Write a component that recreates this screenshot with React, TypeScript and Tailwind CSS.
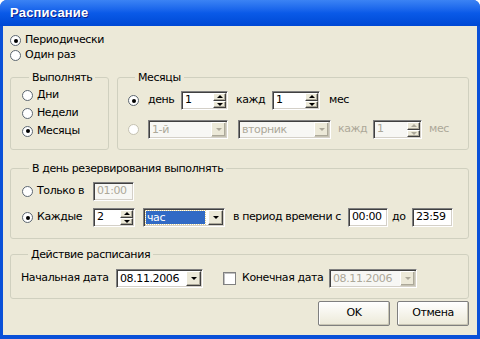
import React from 'react';

const font = { fontFamily: '"DejaVu Sans", Tahoma, sans-serif' };

const Radio = ({ checked, disabled }: { checked?: boolean; disabled?: boolean }) => (
    <span
        className={`relative inline-flex w-[11px] h-[11px] shrink-0 items-center justify-center rounded-full border bg-white ${disabled ? 'border-[#c5c2b2]' : 'border-[#5c6670]'}`}
    >
        {checked && <span className="w-[4px] h-[4px] rounded-full bg-black" />}
    </span>
);

const RadioLabel = ({ checked, disabled, label, w }: { checked?: boolean; disabled?: boolean; label: string; w?: string }) => (
    <div className={`flex items-center h-full ${w ?? ''}`}>
        <Radio checked={checked} disabled={disabled} />
        <span className={`ml-[4px] ${disabled ? 'text-[#aca899]' : 'text-black'}`}>{label}</span>
    </div>
);

// classic sunken field
const Field = ({ w, children, disabled }: { w: string; children: React.ReactNode; disabled?: boolean }) => (
    <div
        className={`flex h-[19px] ${w} border border-t-[#808080] border-l-[#808080] border-b-white border-r-white shadow-[inset_1px_1px_0_#404040,inset_-1px_-1px_0_#d4d0c8] ${disabled ? 'bg-[#f7f7f4] text-[#aca899]' : 'bg-white text-black'}`}
    >
        {children}
    </div>
);

const Arrow = ({ dir, disabled }: { dir: 'up' | 'down'; disabled?: boolean }) => (
    <span
        className={`w-0 h-0 border-l-[3px] border-r-[3px] border-l-transparent border-r-transparent ${dir === 'up' ? 'border-b-[3px]' : 'border-t-[3px]'} ${disabled ? (dir === 'up' ? 'border-b-[#aca899]' : 'border-t-[#aca899]') : dir === 'up' ? 'border-b-black' : 'border-t-black'}`}
    />
);

const RaisedBtn = ({ children, className }: { children: React.ReactNode; className?: string }) => (
    <div
        className={`flex items-center justify-center bg-[#ece9d8] border border-t-white border-l-white border-b-[#404040] border-r-[#404040] shadow-[inset_-1px_-1px_0_#aca899] ${className ?? ''}`}
    >
        {children}
    </div>
);

const Spin = ({ value, w, disabled }: { value: string; w: string; disabled?: boolean }) => (
    <Field w={w} disabled={disabled}>
        <span className="flex-1 pl-[3px] leading-[16px]">{value}</span>
        <div className="flex flex-col w-[13px] m-[1px]">
            <RaisedBtn className="flex-1">
                <Arrow dir="up" disabled={disabled} />
            </RaisedBtn>
            <RaisedBtn className="flex-1">
                <Arrow dir="down" disabled={disabled} />
            </RaisedBtn>
        </div>
    </Field>
);

const Combo = ({ value, w, disabled, selected }: { value: string; w: string; disabled?: boolean; selected?: boolean }) => (
    <Field w={w} disabled={disabled}>
        <div className="flex-1 p-[2px] flex">
            <span
                className={`flex-1 pl-[1px] leading-[13px] ${selected ? 'bg-[#316ac5] text-white outline outline-1 outline-dotted outline-[#e0d090]' : ''}`}
            >
                {value}
            </span>
        </div>
        <RaisedBtn className={`w-[15px] m-[1px] ${disabled ? 'border-b-[#c5c2b2] border-r-[#c5c2b2]' : ''}`}>
            <Arrow dir="down" disabled={disabled} />
        </RaisedBtn>
    </Field>
);

const TextBox = ({ value, w, disabled }: { value: string; w: string; disabled?: boolean }) => (
    <Field w={w} disabled={disabled}>
        <span className="pl-[3px] leading-[16px]">{value}</span>
    </Field>
);

const Group = ({ title, className, children }: { title: string; className: string; children: React.ReactNode }) => (
    <fieldset className={`border border-[#d0d0bf] rounded-[3px] ${className}`}>
        <legend className="ml-[7px] px-[3px] leading-[13px]">{title}</legend>
        {children}
    </fieldset>
);

export default function App() {
    return (
        <div className="w-[480px] h-[339px] bg-white text-[11px] tracking-[-0.4px] text-black" style={font}>
            <div className="flex flex-col w-full h-full rounded-t-[7px] bg-[#0a50d8] overflow-hidden">
                {/* title bar */}
                <div className="h-[26px] shrink-0 flex items-center pl-[10px] bg-gradient-to-b from-[#3b83f4] via-[#0a5ae8] to-[#0048d4]">
                    <span className="text-white font-bold text-[13px] tracking-[0.2px] [text-shadow:1px_1px_0_#0a1e8c]" style={{ fontFamily: '"Liberation Sans", Arial, sans-serif' }}>
                        Расписание
                    </span>
                </div>

                {/* body */}
                <div className="flex-1 flex flex-col mx-[3px] mb-[4px] bg-[#ece9d8] pl-[7px] pr-[8px] pt-[7px]">
                    <div className="flex flex-col">
                        <div className="h-[15px]"><RadioLabel checked label="Периодически" /></div>
                        <div className="h-[15px]"><RadioLabel label="Один раз" /></div>
                    </div>

                    <div className="flex gap-[8px] mt-[8px]">
                        <Group title="Выполнять" className="w-[99px] h-[79px] pl-[11px] pt-[2px]">
                            <div className="h-[18px]"><RadioLabel label="Дни" /></div>
                            <div className="h-[18px]"><RadioLabel label="Недели" /></div>
                            <div className="h-[18px]"><RadioLabel checked label="Месяцы" /></div>
                        </Group>

                        <Group title="Месяцы" className="flex-1 h-[79px] pl-[10px] pt-[7px]">
                            <div className="flex items-center h-[19px]">
                                <Radio checked />
                                <span className="ml-[9px] w-[33px]">день</span>
                                <Spin value="1" w="w-[47px]" />
                                <span className="ml-[8px] w-[36px]">кажд</span>
                                <Spin value="1" w="w-[48px]" />
                                <span className="ml-[9px]">мес</span>
                            </div>
                            <div className="flex items-center h-[19px] mt-[10px]">
                                <Radio disabled />
                                <span className="ml-[9px]" />
                                <Combo value="1-й" w="w-[80px]" disabled />
                                <span className="ml-[10px]" />
                                <Combo value="вторник" w="w-[93px]" disabled />
                                <span className="ml-[7px] w-[35px] text-[#aca899]">кажд</span>
                                <Spin value="1" w="w-[49px]" disabled />
                                <span className="ml-[7px] text-[#aca899]">мес</span>
                            </div>
                        </Group>
                    </div>

                    <Group title="В день резервирования выполнять" className="mt-[12px] h-[77px] pl-[11px] pt-[7px]">
                        <div className="flex items-center h-[19px]">
                            <RadioLabel label="Только в" w="w-[71px]" />
                            <TextBox value="01:00" w="w-[41px]" disabled />
                        </div>
                        <div className="flex items-center h-[19px] mt-[7px]">
                            <RadioLabel checked label="Каждые" w="w-[71px]" />
                            <Spin value="2" w="w-[42px]" />
                            <span className="ml-[8px]" />
                            <Combo value="час" w="w-[82px]" selected />
                            <span className="ml-[8px] w-[115px] whitespace-nowrap">в период времени с</span>
                            <TextBox value="00:00" w="w-[40px]" />
                            <span className="ml-[4px] w-[20px]">до</span>
                            <TextBox value="23:59" w="w-[41px]" />
                        </div>
                    </Group>

                    <Group title="Действие расписания" className="mt-[9px] h-[51px] pl-[10px] pt-[8px]">
                        <div className="flex items-center h-[19px]">
                            <span className="w-[95px]">Начальная дата</span>
                            <Combo value="08.11.2006" w="w-[87px]" />
                            <span className="ml-[20px] w-[13px] h-[13px] border border-[#808080] bg-white shadow-[inset_1px_1px_0_#c0c0c0]" />
                            <span className="ml-[6px] w-[87px]">Конечная дата</span>
                            <Combo value="08.11.2006" w="w-[88px]" disabled />
                        </div>
                    </Group>

                    <div className="flex justify-end gap-[7px] mt-[2px]">
                        {['OK', 'Отмена'].map(t => (
                            <div
                                key={t}
                                className="w-[72px] h-[25px] flex items-center justify-center rounded-[2px] border border-[#7f7f7f] bg-gradient-to-b from-white to-[#ece9d8] shadow-[inset_-1px_-1px_0_#c8c5b4,inset_1px_1px_0_#ffffff]"
                            >
                                {t}
                            </div>
                        ))}
                    </div>
                </div>
            </div>
        </div>
    );
}
